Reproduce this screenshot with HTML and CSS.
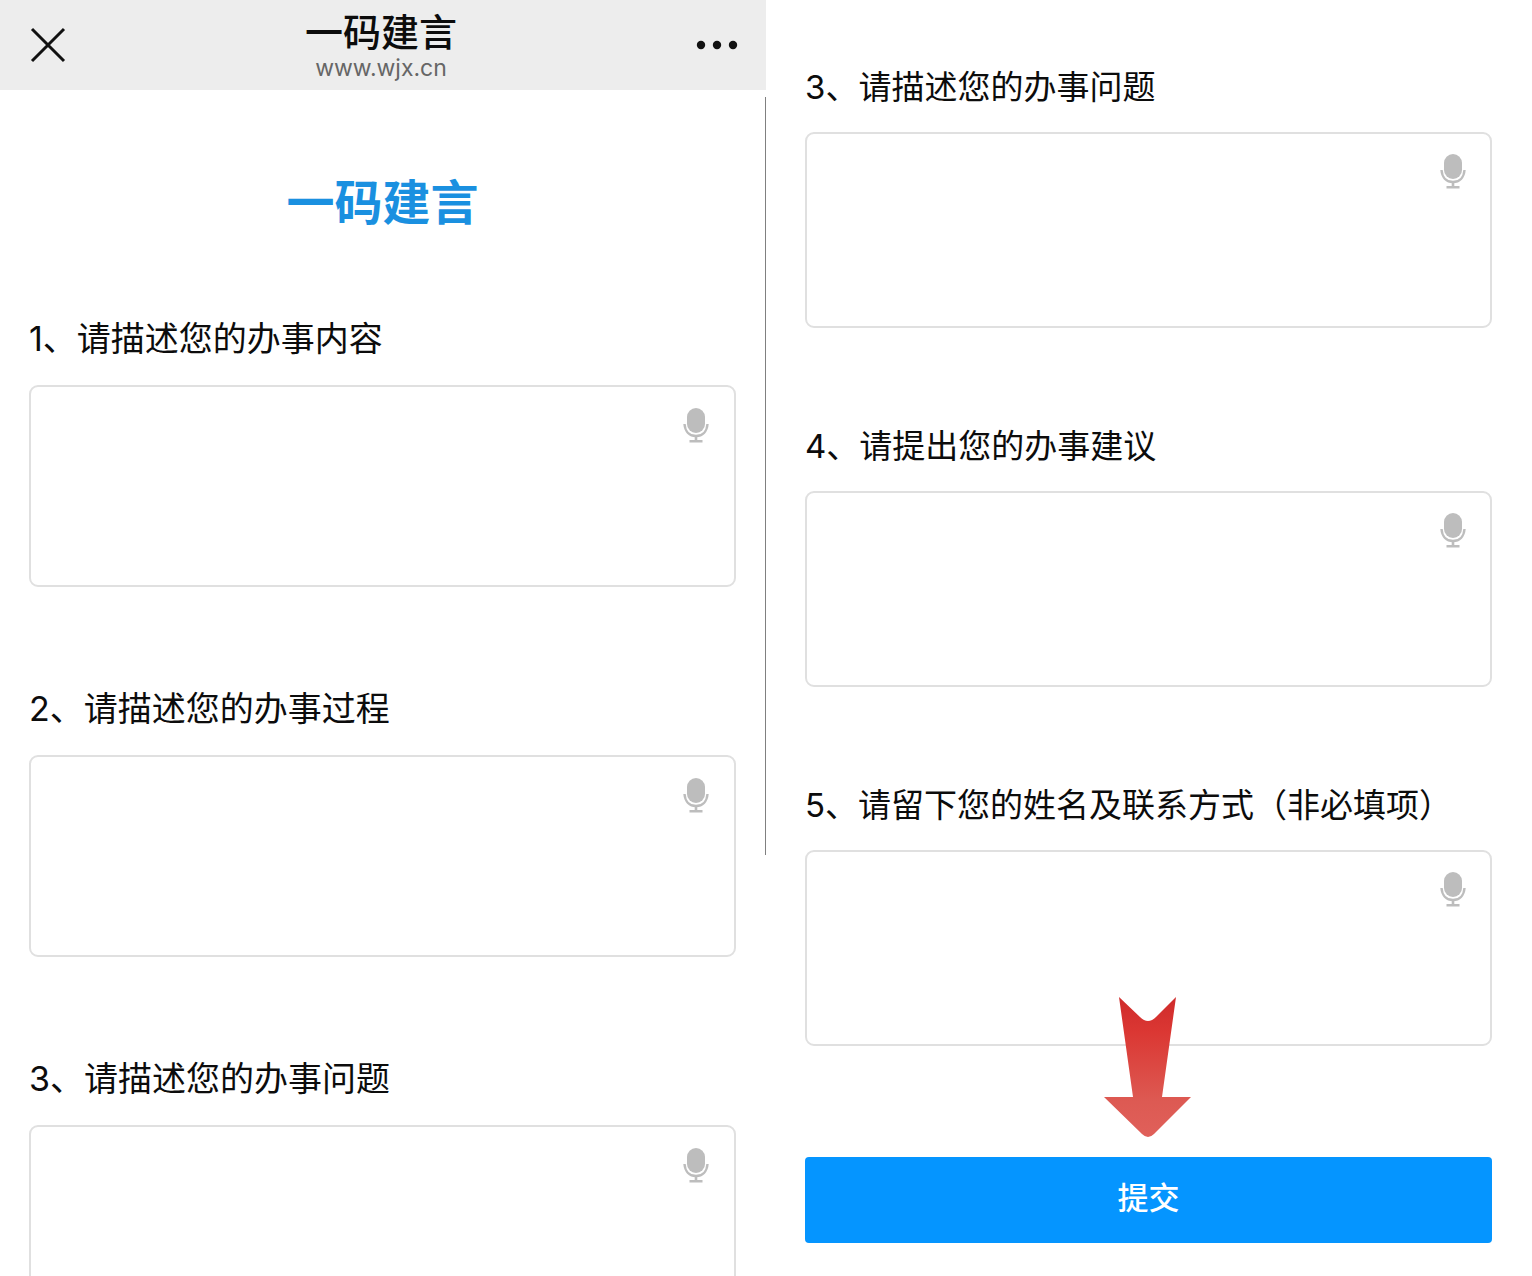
FILE: index.html
```html
<!DOCTYPE html>
<html lang="zh-CN">
<head>
    <meta charset="UTF-8">
    <meta name="viewport" content="width=device-width, initial-scale=1.0">
    <title>一码建言</title>
    <link rel="stylesheet" href="styles.css">
</head>
<body>
    <!-- shared icon -->
    <svg class="sprite" aria-hidden="true">
        <symbol id="mic" viewBox="0 0 26 35">
            <rect x="4" y="0" width="18" height="25" rx="9" fill="#bdbdbd"/>
            <path d="M1.500 16C2 23.500 6.500 28 13 28S24 23.500 24.500 16" fill="none" stroke="#bdbdbd" stroke-width="2.400"/>
            <path d="M13 28V33M6.500 33.200H19.500" fill="none" stroke="#bdbdbd" stroke-width="2.600"/>
        </symbol>
    </svg>

    <div class="screens">
        <section class="screen screen-left">
            <header class="nav-bar">
                <button type="button" class="nav-button" aria-label="关闭">
                    <svg width="36" height="36" viewBox="0 0 36 36"><path d="M2 2L34 34M34 2L2 34" stroke="#111" stroke-width="3"/></svg>
                </button>
                <div class="nav-text">
                    <div class="nav-title">一码建言</div>
                    <div class="nav-url">www.wjx.cn</div>
                </div>
                <button type="button" class="nav-button" aria-label="更多">
                    <svg width="42" height="10" viewBox="0 0 42 10" fill="#111"><circle cx="5" cy="5" r="4.200"/><circle cx="21" cy="5" r="4.200"/><circle cx="37" cy="5" r="4.200"/></svg>
                </button>
            </header>
            <form class="survey">
                <h1>一码建言</h1>
                <div class="question">
                    <label for="a1">1、请描述您的办事内容</label>
                    <div class="answer">
                        <textarea id="a1"></textarea>
                        <button type="button" class="mic" aria-label="语音输入"><svg><use href="#mic"/></svg></button>
                    </div>
                </div>
                <div class="question">
                    <label for="a2">2、请描述您的办事过程</label>
                    <div class="answer">
                        <textarea id="a2"></textarea>
                        <button type="button" class="mic" aria-label="语音输入"><svg><use href="#mic"/></svg></button>
                    </div>
                </div>
                <div class="question">
                    <label for="a3">3、请描述您的办事问题</label>
                    <div class="answer">
                        <textarea id="a3"></textarea>
                        <button type="button" class="mic" aria-label="语音输入"><svg><use href="#mic"/></svg></button>
                    </div>
                </div>
            </form>
        </section>

        <section class="screen screen-right">
            <form class="survey">
                <div class="question">
                    <label for="b3">3、请描述您的办事问题</label>
                    <div class="answer">
                        <textarea id="b3"></textarea>
                        <button type="button" class="mic" aria-label="语音输入"><svg><use href="#mic"/></svg></button>
                    </div>
                </div>
                <div class="question">
                    <label for="b4">4、请提出您的办事建议</label>
                    <div class="answer">
                        <textarea id="b4"></textarea>
                        <button type="button" class="mic" aria-label="语音输入"><svg><use href="#mic"/></svg></button>
                    </div>
                </div>
                <div class="question">
                    <label for="b5">5、请留下您的姓名及联系方式（非必填项）</label>
                    <div class="answer">
                        <textarea id="b5"></textarea>
                        <button type="button" class="mic" aria-label="语音输入"><svg><use href="#mic"/></svg></button>
                    </div>
                </div>
                <div class="submit-row">
                    <svg class="arrow" width="88" height="142" viewBox="0 0 88 142" aria-hidden="true">
                        <defs>
                            <linearGradient id="red" x1="0" y1="0" x2="0" y2="1">
                                <stop offset="0" stop-color="#cf2b2b"/>
                                <stop offset="0.250" stop-color="#db3733"/>
                                <stop offset="0.750" stop-color="#dd5a53"/>
                                <stop offset="1" stop-color="#e0605a"/>
                            </linearGradient>
                        </defs>
                        <path d="M15 1L36 21Q44 29 52 21L72 1L58 101H87L50 138Q44 144 38 138L0 101H29Z" fill="url(#red)"/>
                    </svg>
                    <button type="submit" class="submit">提交</button>
                </div>
            </form>
        </section>
    </div>
</body>
</html>
```
FILE: styles.css
```css
* {
    box-sizing: border-box;
}

body {
    margin: 0;
    background: #fff;
    color: #0c0c0c;
    font-family: Inter, "Noto Sans CJK SC", sans-serif;
}

button {
    padding: 0;
    border: none;
    background: none;
    font-family: inherit;
    cursor: pointer;
}

svg {
    display: block;
}

.sprite {
    display: none;
}

.screens {
    display: grid;
    grid-template-columns: 1fr 1fr;
    grid-template-rows: 100%;
    height: 100vh;
    overflow: hidden;
}

.screen {
    min-width: 0;
}

.screen-left {
    position: relative;
}

/* thin line between the two screens */
.screen-left::after {
    content: "";
    position: absolute;
    top: 97px;
    right: 0;
    bottom: 33vh;
    width: 1px;
    background: #808080;
}

.nav-bar {
    display: flex;
    align-items: center;
    justify-content: space-between;
    height: 90px;
    padding: 0 28px 0 30px;
    background: #ededed;
}

.nav-button {
    display: flex;
    align-items: center;
    height: 42px;
}

.nav-text {
    text-align: center;
}

.nav-title {
    font-size: 38px;
    font-weight: 500;
    line-height: 46px;
}

.nav-url {
    color: #666;
    font-size: 23px;
    line-height: 26px;
}

.screen-left .survey {
    padding: 77px 30px 0 29px;
}

.screen-right .survey {
    padding: 64px 40px 33px 39px;
}

h1 {
    margin: 0 0 76px;
    color: #1a90e0;
    font-size: 48px;
    font-weight: 700;
    line-height: 72px;
    text-align: center;
}

.question label {
    display: block;
    font-size: 34px;
    line-height: 48px;
    white-space: nowrap;
}

.screen-right label {
    font-size: 33px;
    line-height: 46px;
}

.question {
    margin-bottom: 98px;
}

.screen-right .question {
    margin-bottom: 95px;
}

.answer {
    position: relative;
    margin-top: 22px;
}

textarea {
    display: block;
    width: 100%;
    height: 202px;
    padding: 20px 70px 20px 20px;
    border: 2px solid #e0e0e0;
    border-radius: 9px;
    background: #fff;
    font: inherit;
    font-size: 30px;
    resize: none;
    outline: none;
}

.screen-right textarea {
    height: 196px;
}

.mic {
    position: absolute;
    top: 23px;
    right: 27px;
}

.screen-right .mic {
    top: 22px;
    right: 26px;
}

.mic svg {
    width: 26px;
    height: 35px;
}

.submit-row {
    position: relative;
    margin-top: 111px;
}

.arrow {
    position: absolute;
    bottom: 105px;
    left: 50%;
    margin-left: -45px;
}

.submit {
    display: block;
    width: 100%;
    height: 86px;
    padding-bottom: 9px;
    border-radius: 4px;
    background: #0595ff;
    color: #fff;
    font-size: 31px;
    font-weight: 500;
}
```
